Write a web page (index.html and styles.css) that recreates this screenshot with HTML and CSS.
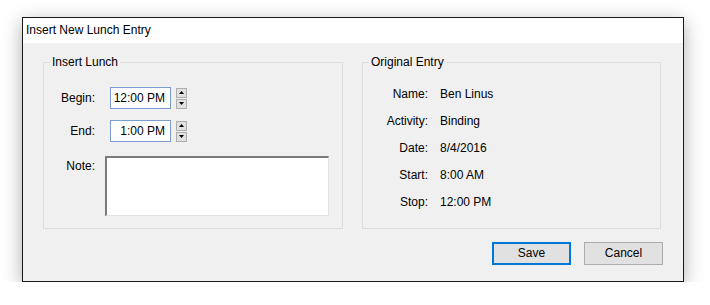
FILE: index.html
```html
<!DOCTYPE html>
<html>
<head>
<meta charset="utf-8">
<link rel="stylesheet" href="styles.css">
</head>
<body>
<div class="window">
  <div class="titlebar">Insert New Lunch Entry</div>
  <div class="content">
    <div class="groups">
      <fieldset class="group group-left">
        <legend>Insert Lunch</legend>
        <div class="row row-begin">
          <span class="label">Begin:</span>
          <span class="time-input">12:00 PM</span>
          <span class="spinner">
            <span class="spin-btn"><svg width="5" height="3" viewBox="0 0 5 3"><path d="M2.5 0 L5 3 L0 3 Z" fill="#000"/></svg></span>
            <span class="spin-btn"><svg width="5" height="3" viewBox="0 0 5 3"><path d="M0 0 L5 0 L2.5 3 Z" fill="#000"/></svg></span>
          </span>
        </div>
        <div class="row row-end">
          <span class="label">End:</span>
          <span class="time-input">1:00 PM</span>
          <span class="spinner">
            <span class="spin-btn"><svg width="5" height="3" viewBox="0 0 5 3"><path d="M2.5 0 L5 3 L0 3 Z" fill="#000"/></svg></span>
            <span class="spin-btn"><svg width="5" height="3" viewBox="0 0 5 3"><path d="M0 0 L5 0 L2.5 3 Z" fill="#000"/></svg></span>
          </span>
        </div>
        <div class="row row-note">
          <span class="label note-label">Note:</span>
          <div class="note-box"></div>
        </div>
      </fieldset>
      <fieldset class="group group-right">
        <legend>Original Entry</legend>
        <div class="info">
          <div class="info-row"><span class="ilabel">Name:</span><span class="ivalue">Ben Linus</span></div>
          <div class="info-row"><span class="ilabel">Activity:</span><span class="ivalue">Binding</span></div>
          <div class="info-row"><span class="ilabel">Date:</span><span class="ivalue">8/4/2016</span></div>
          <div class="info-row"><span class="ilabel">Start:</span><span class="ivalue">8:00 AM</span></div>
          <div class="info-row"><span class="ilabel">Stop:</span><span class="ivalue">12:00 PM</span></div>
        </div>
      </fieldset>
    </div>
    <div class="buttons">
      <span class="btn btn-default">Save</span>
      <span class="btn">Cancel</span>
    </div>
  </div>
</div>
</body>
</html>
```

FILE: styles.css
```css
* { box-sizing: border-box; }
html, body {
  margin: 0;
  padding: 0;
  background: #ffffff;
}
body {
  font-family: "Liberation Sans", Arial, sans-serif;
  font-size: 12px;
  color: #000;
  padding: 17px 0 0 22px;
}
.window {
  width: 662px;
  height: 265px;
  border: 1px solid #1a1a1a;
  background: #f0f0f0;
  box-shadow: 0 5px 18px rgba(0,0,0,0.32);
  display: flex;
  flex-direction: column;
}
.titlebar {
  height: 25px;
  background: #ffffff;
  line-height: 25px;
  padding-left: 3px;
  flex: none;
}
.content {
  flex: 1;
  padding: 12px 0 0 20px;
  display: flex;
  flex-direction: column;
}
.groups {
  display: flex;
  gap: 19px;
}
.group {
  margin: 0;
  border: 1px solid #dcdcdc;
  padding: 0;
  height: 174px;
}
.group legend {
  padding: 0 2px;
  margin-left: 6px;
  line-height: 14px;
}
.group-left { width: 300px; }
.group-right { width: 299px; }

.row {
  display: flex;
  align-items: center;
}
.label {
  width: 51px;
  text-align: right;
  flex: none;
}
.row-begin { margin-top: 18px; }
.row-end { margin-top: 11px; }
.time-input {
  margin-left: 15px;
  width: 61px;
  height: 22px;
  border: 1px solid #7a9cd3;
  background: #fff;
  text-align: right;
  padding-right: 5px;
  line-height: 20px;
}
.spinner {
  margin-left: 5px;
  display: flex;
  flex-direction: column;
  gap: 1px;
}
.spin-btn {
  width: 11px;
  height: 10px;
  background: #e1e1e1;
  border: 1px solid #adadad;
  display: flex;
  align-items: center;
  justify-content: center;
}
.spin-btn svg { display: block; }
.row-note {
  align-items: flex-start;
  margin-top: 14px;
}
.note-label { padding-top: 3px; }
.note-box {
  margin-left: 10px;
  width: 224px;
  height: 60px;
  background: #fff;
  border-style: solid;
  border-width: 2px 1px 1px 2px;
  border-color: #7a7a7a #e3e3e3 #e3e3e3 #7a7a7a;
}

.info {
  display: flex;
  flex-direction: column;
  gap: 11px;
  padding-top: 17px;
}
.info-row {
  display: flex;
  line-height: 16px;
}
.ilabel {
  width: 65px;
  text-align: right;
}
.ivalue { margin-left: 12px; }

.buttons {
  display: flex;
  justify-content: flex-end;
  gap: 13px;
  padding-right: 20px;
  margin-top: 13px;
}
.btn {
  width: 79px;
  height: 23px;
  background: #e1e1e1;
  border: 1px solid #adadad;
  text-align: center;
  line-height: 21px;
}
.btn-default {
  border: 2px solid #0078d7;
  line-height: 19px;
}
```
